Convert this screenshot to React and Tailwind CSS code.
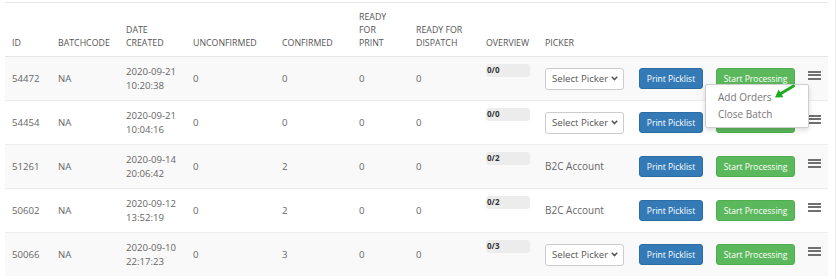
const batches = [
  { id: '54472', date: '2020-09-21', time: '10:20:38', confirmed: '0', overview: '0/0', picker: null },
  { id: '54454', date: '2020-09-21', time: '10:04:16', confirmed: '0', overview: '0/0', picker: null },
  { id: '51261', date: '2020-09-14', time: '20:06:42', confirmed: '2', overview: '0/2', picker: 'B2C Account' },
  { id: '50602', date: '2020-09-12', time: '13:52:19', confirmed: '2', overview: '0/2', picker: 'B2C Account' },
  { id: '50066', date: '2020-09-10', time: '22:17:23', confirmed: '3', overview: '0/3', picker: null },
];

const widths = [46, 68, 67, 89, 77, 57, 70, 59, 94, 77, 92, 27];

const PickerSelect = () => (
  <div className="flex items-center justify-between w-[79px] h-[22px] pl-[6px] pr-[5px] border border-[#ccc] rounded-[3px] bg-white text-[9.6px] text-[#555]">
    <span>Select Picker</span>
    <svg width="7" height="5" viewBox="0 0 7 5">
      <path d="M0.8 0.8 L3.5 3.6 L6.2 0.8" fill="none" stroke="#555" strokeWidth="1.5" />
    </svg>
  </div>
);

const Bars = () => (
  <div className="flex flex-col gap-[1.5px] w-[13px] mb-[7px]">
    <div className="h-[2px] bg-[#707070]" />
    <div className="h-[2px] bg-[#707070]" />
    <div className="h-[2px] bg-[#707070]" />
  </div>
);

export default function App() {
  const cell = 'px-[7px] py-[7.5px] align-middle';

  return (
    <div
      className="relative w-[837px] h-[279px] bg-white overflow-hidden"
      style={{ fontFamily: '"Open Sans", "Noto Sans", sans-serif' }}
    >
      <div className="w-[836px] h-full border-r border-[#ececec] pl-[5px] pt-[2px]">
        <table className="table-fixed border-collapse w-[823px] text-[9.6px] leading-[14px] text-[#666]">
          <colgroup>
            {widths.map((w, i) => (
              <col key={i} style={{ width: w }} />
            ))}
          </colgroup>
          <thead>
            <tr className="border-t border-b border-[#e6e6e6] text-[8.8px] leading-[13px] text-[#555] uppercase">
              {[
                'ID',
                'Batchcode',
                <>Date<br />Created</>,
                'Unconfirmed',
                'Confirmed',
                <>Ready<br />for<br />Print</>,
                <>Ready for<br />Dispatch</>,
                'Overview',
                'Picker',
                '',
                '',
                '',
              ].map((h, i) => (
                <th key={i} className="px-[7px] pt-[8px] pb-[6px] align-bottom text-left font-normal">
                  {h}
                </th>
              ))}
            </tr>
          </thead>
          <tbody>
            {batches.map((b, i) => (
              <tr key={b.id} className={`border-t border-[#ececec] ${i % 2 === 0 ? 'bg-[#f9f9f9]' : 'bg-white'}`}>
                <td className={cell}>{b.id}</td>
                <td className={cell}>NA</td>
                <td className={cell}>
                  {b.date}
                  <br />
                  {b.time}
                </td>
                <td className={cell}>0</td>
                <td className={cell}>{b.confirmed}</td>
                <td className={cell}>0</td>
                <td className={cell}>0</td>
                <td className="px-[7px] pt-[7px] pb-[7.5px] align-top">
                  <div className="w-[44px] h-[13px] rounded-[3px] bg-[#ececec] pl-[1px] pt-[2px] text-[8px] leading-none font-bold text-[#333]">
                    {b.overview}
                  </div>
                </td>
                <td className={cell}>{b.picker ? <span className="text-[10px]">{b.picker}</span> : <PickerSelect />}</td>
                <td className={cell}>
                  <button className="w-[64px] h-[21px] rounded-[3px] bg-[#337ab7] border border-[#2e6da4] text-white text-[8.5px] font-medium">
                    Print Picklist
                  </button>
                </td>
                <td className={cell}>
                  <button className="w-[79px] h-[21px] rounded-[3px] bg-[#5cb85c] border border-[#4cae4c] text-white text-[8.5px] font-medium">
                    Start Processing
                  </button>
                </td>
                <td className="py-[7.5px] pl-[7px] pr-0 align-middle">
                  <Bars />
                </td>
              </tr>
            ))}
          </tbody>
        </table>
      </div>

      {/* open row menu */}
      <div className="absolute left-[705px] top-[84px] w-[104px] py-[4px] bg-white border border-[#cfcfcf] rounded-[2px] shadow-[0_2px_5px_rgba(0,0,0,0.15)] text-[10px] leading-[17px] text-[#777]">
        <div className="pl-[12px]">Add Orders</div>
        <div className="pl-[12px]">Close Batch</div>
      </div>

      {/* annotation arrow */}
      <svg className="absolute left-[770px] top-[82px]" width="28" height="20" viewBox="0 0 28 20">
        <line x1="23.5" y1="4" x2="10.5" y2="11.8" stroke="#1faa1f" strokeWidth="3" strokeLinecap="round" />
        <polygon points="5,15.5 8.6,7.6 13.4,15.2" fill="#1faa1f" />
      </svg>
    </div>
  );
}
